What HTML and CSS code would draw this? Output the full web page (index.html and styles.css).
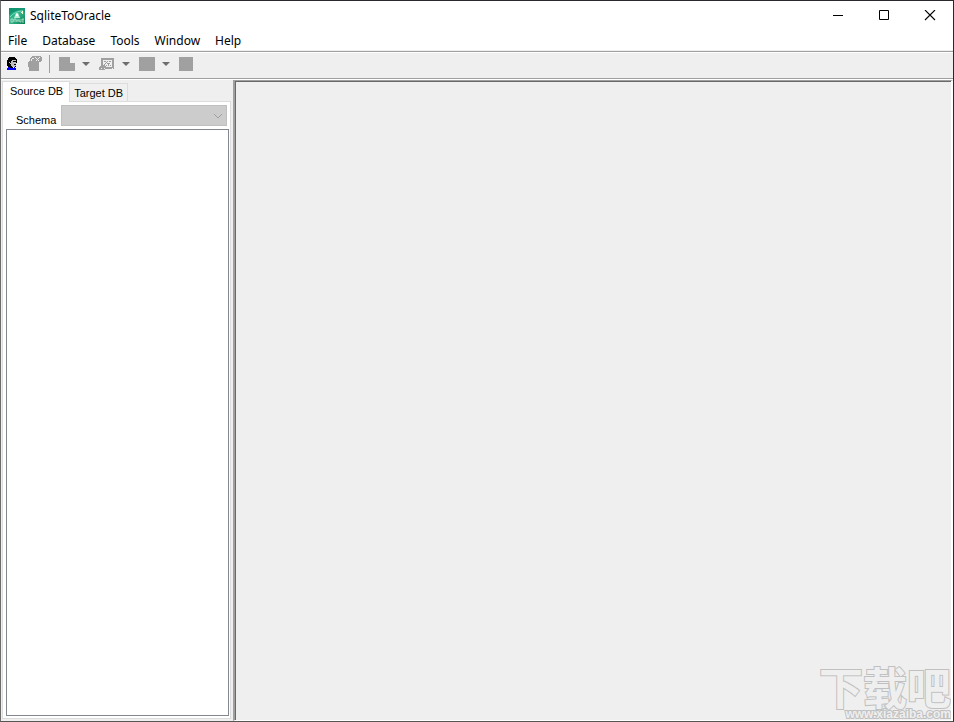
FILE: index.html
```html
<!DOCTYPE html>
<html lang="en">
<head>
    <meta charset="UTF-8">
    <meta name="viewport" content="width=device-width, initial-scale=1.0">
    <title>SqliteToOracle</title>
    <link rel="stylesheet" href="styles.css">
</head>
<body>

<div class="window">
    <header class="titlebar">
        <svg class="app-icon" width="16" height="16" viewBox="0 0 16 16" aria-hidden="true">
            <defs>
                <linearGradient id="green" x1="0" y1="0" x2="1" y2="1">
                    <stop offset="0" stop-color="#12a880"/>
                    <stop offset="0.5" stop-color="#35b78c"/>
                    <stop offset="1" stop-color="#087c50"/>
                </linearGradient>
            </defs>
            <rect width="16" height="16" fill="url(#green)"/>
            <path d="M0 7Q6 2 14 2L16 5V0H0z" fill="#0a8a68" opacity=".7"/>
            <path d="M1 9Q6 3 14 3" fill="none" stroke="#7fd8b9"/>
            <path d="M5 10L7 5H9L11 10z" fill="#b9ecd8"/>
            <path d="M7 6h2v2H7z" fill="#fff"/>
            <path d="M12 4h2v1h-2zM13 3h1v3h-1z" fill="#f4ffd8"/>
            <path d="M2 11h2v3H2zM5 14v-3h2v3M8 14v-2h2v2M11 11v3h1M15 11h-2v3h2M13 12h2" fill="none" stroke="#b4e4ce" stroke-width=".8"/>
        </svg>
        <h1 class="title">SqliteToOracle</h1>
        <div class="window-buttons">
            <button type="button" aria-label="Minimize">
                <svg width="12" height="12" viewBox="0 0 12 12"><path d="M1 5.5h10" stroke="#000"/></svg>
            </button>
            <button type="button" aria-label="Maximize">
                <svg width="12" height="12" viewBox="0 0 12 12"><path d="M1.5 .5h9v9h-9z" fill="none" stroke="#000"/></svg>
            </button>
            <button type="button" aria-label="Close">
                <svg width="12" height="12" viewBox="0 0 12 12"><path d="M1 0l10 10M11 0L1 10" stroke="#000" stroke-width="1.1"/></svg>
            </button>
        </div>
    </header>

    <nav class="menubar">
        <button type="button">File</button>
        <button type="button">Database</button>
        <button type="button">Tools</button>
        <button type="button">Window</button>
        <button type="button">Help</button>
    </nav>

    <div class="toolbar">
        <button type="button" class="tool" aria-label="Connect">
            <svg width="16" height="16" viewBox="0 0 16 16" shape-rendering="crispEdges">
                <path d="M5 1h6v1h1v1h1v4h-1v4h-3v1H5v-1H4v-1H3V4h1V2h1z" fill="#000"/>
                <path d="M8 4h4v6h-1v1H8v-1H7V8H6V7H5V6h1v1h1V5h1z" fill="#c0c0c0"/>
                <path d="M9 5h3v1H9zM10 8h2v1h-2z" fill="#000"/>
                <path d="M4 11h2v1h4v-1h1v1h1v2H3v-2h1z" fill="#00f"/>
            </svg>
        </button>
        <button type="button" class="tool" aria-label="Disconnect" disabled>
            <svg width="16" height="16" viewBox="0 0 16 16" shape-rendering="crispEdges">
                <path d="M5 0h9v1h1v4h-1v1h-2v9H2v-4H1V6h1V5h1V2h1V1h1z" fill="#a0a0a0"/>
                <path d="M8 1h1v1h1v1h1V2h1V1h1v1h-1v1h-1v1h1v1h-1V4h-1v1H9V4h1V3H9V2H8zM5 2h2v1H5zM4 3h1v2H4z" fill="#efefef"/>
            </svg>
        </button>
        <span class="separator"></span>
        <button type="button" class="tool" aria-label="New query" disabled>
            <svg width="16" height="16" viewBox="0 0 16 16"><path d="M0 1h11v6h5v8H0z" fill="#a0a0a0" shape-rendering="crispEdges"/></svg>
        </button>
        <button type="button" class="drop" aria-label="Query options" disabled>
            <svg width="8" height="4" viewBox="0 0 8 4"><path d="M0 0h8L4 4z" fill="#6d6d6d"/></svg>
        </button>
        <button type="button" class="tool" aria-label="Table data" disabled>
            <svg width="16" height="16" viewBox="0 0 16 16" shape-rendering="crispEdges">
                <path d="M2 2h13v11H6v1H0v-3h1v-1h1z" fill="#a0a0a0"/>
                <path d="M4 4h9v7H7v-1H6V9H4z" fill="#efefef"/>
                <path d="M5 5h2v1H5zM8 5h1v1H8zM10 5h2v1h-2zM6 7h1v1H6zM8 7h3v1H8zM7 6h1v1H7zM9 8h1v2H9zM11 9h1v1h-1zM5 8h1v1H5zM7 9h1v1H7z" fill="#a0a0a0"/>
                <path d="M2 12h1v1H2zM5 12h1v1H5zM13 12h1v1h-1z" fill="#efefef"/>
            </svg>
        </button>
        <button type="button" class="drop" aria-label="Table options" disabled>
            <svg width="8" height="4" viewBox="0 0 8 4"><path d="M0 0h8L4 4z" fill="#6d6d6d"/></svg>
        </button>
        <button type="button" class="tool" aria-label="Export" disabled>
            <svg width="16" height="16" viewBox="0 0 16 16"><path d="M0 1h16v14H0z" fill="#a0a0a0" shape-rendering="crispEdges"/></svg>
        </button>
        <button type="button" class="drop" aria-label="Export options" disabled>
            <svg width="8" height="4" viewBox="0 0 8 4"><path d="M0 0h8L4 4z" fill="#6d6d6d"/></svg>
        </button>
        <button type="button" class="tool" aria-label="Stop" disabled>
            <svg width="16" height="16" viewBox="0 0 16 16"><path d="M0 1h14v14H0z" fill="#a0a0a0" shape-rendering="crispEdges"/></svg>
        </button>
    </div>

    <div class="main">
        <aside class="sidebar">
            <div class="tabs" role="tablist">
                <button type="button" class="tab active" role="tab" aria-selected="true">Source DB</button>
                <button type="button" class="tab" role="tab" aria-selected="false">Target DB</button>
            </div>
            <div class="tab-page" role="tabpanel">
                <div class="schema-row">
                    <label for="schema">Schema</label>
                    <div class="select-box">
                        <select id="schema" disabled></select>
                        <svg class="chevron" width="10" height="6" viewBox="0 0 10 6" aria-hidden="true"><path d="M1 1l4 4 4-4" fill="none" stroke="#a0a0a0"/></svg>
                    </div>
                </div>
                <div class="tree"></div>
            </div>
        </aside>
        <main class="workspace">
            <div class="watermark">
                <span class="mark-name" lang="zh">下载吧</span>
                <span class="mark-url">www.xiazaiba.com</span>
            </div>
        </main>
    </div>
</div>

</body>
</html>
```

FILE: styles.css
```css
* {
    box-sizing: border-box;
}

body {
    margin: 0;
    font-family: "Noto Sans", "Open Sans", sans-serif;
    font-size: 12px;
    color: #000;
}

button {
    margin: 0;
    padding: 0;
    border: none;
    background: none;
    font: inherit;
    color: inherit;
}

svg {
    display: block;
}

.window {
    display: flex;
    flex-direction: column;
    height: 100vh;
    border: 1px solid #29282c;
    border-left-color: #6c6c6c;
    border-bottom-color: #555;
    background-color: #efefef;
}

/* title bar */
.titlebar {
    display: flex;
    align-items: center;
    height: 29px;
    padding-left: 8px;
    background-color: #fff;
}

.title {
    flex: 1;
    margin: 0 0 0 5px;
    font-size: 12px;
    font-weight: normal;
}

.window-buttons {
    display: flex;
}

.window-buttons button {
    display: flex;
    justify-content: center;
    align-items: center;
    width: 46px;
    height: 29px;
}

/* menu */
.menubar {
    display: flex;
    height: 20px;
    background-color: #fff;
}

.menubar button {
    padding: 0 8px 0 7px;
    line-height: 22px;
}

/* toolbar */
.toolbar {
    display: flex;
    align-items: center;
    height: 28px;
    margin-top: 1px;
    padding: 0 0 2px 3px;
    border-top: 1px solid #a0a0a0;
    border-bottom: 1px solid #a0a0a0;
    box-shadow: inset 0 1px #fff, 0 1px #fff;
}

.tool {
    width: 16px;
    margin-right: 7px;
}

.separator {
    width: 1px;
    height: 18px;
    margin: 0 9px 0 -1px;
    background-color: #a0a0a0;
}

.drop {
    width: 8px;
    margin-right: 9px;
}

/* panels */
.main {
    display: flex;
    flex: 1;
    min-height: 0;
    margin-top: 1px;
}

.sidebar {
    display: flex;
    flex-direction: column;
    width: 230px;
    padding: 1px 0 2px 1px;
    font-family: "Liberation Sans", Arial, sans-serif;
    font-size: 11px;
}

.tabs {
    display: flex;
    align-items: flex-end;
    height: 20px;
}

.tab {
    height: 18px;
    padding: 0 4px;
    border: 1px solid #dcdcdc;
    border-left: none;
    border-bottom: none;
    background-color: #f0f0f0;
}

.tab.active {
    z-index: 1;
    height: 21px;
    margin-bottom: -1px;
    padding: 0 6px 2px 7px;
    border-left: 1px solid #dcdcdc;
    background-color: #fff;
}

.tab-page {
    display: flex;
    flex-direction: column;
    flex: 1;
    gap: 3px;
    padding: 3px 1px 2px 3px;
    border: 1px solid #dcdcdc;
    background-color: #fff;
}

.schema-row {
    display: flex;
    align-items: center;
    gap: 5px;
    padding: 0 2px 0 10px;
}

.schema-row label {
    padding-top: 8px;
}

.select-box {
    position: relative;
    flex: 1;
}

.select-box select {
    display: block;
    width: 100%;
    height: 21px;
    border: 1px solid #bfbfbf;
    border-radius: 0;
    background-color: #ccc;
    appearance: none;
    opacity: 1;
}

.chevron {
    position: absolute;
    top: 8px;
    right: 4px;
}

.tree {
    flex: 1;
    border: 1px solid #828790;
    background-color: #fff;
}

.workspace {
    position: relative;
    flex: 1;
    margin-left: 2px;
    border-style: solid;
    border-width: 1px 2px 1px 2px;
    border-color: #a0a0a0 #fff #fff #a0a0a0;
    box-shadow: inset 1px 1px #696969;
    overflow: hidden;
}

.watermark {
    position: absolute;
    right: 0;
    bottom: 0;
    display: flex;
    flex-direction: column;
    align-items: flex-end;
    color: #efefef;
    -webkit-text-stroke: 2px #c0c0c0;
    paint-order: stroke fill;
}

.mark-name {
    font-family: "Noto Sans CJK SC", sans-serif;
    font-size: 44px;
    font-weight: bold;
    line-height: 44px;
}

.mark-url {
    font-family: "Liberation Sans", Arial, sans-serif;
    font-size: 12px;
    font-weight: bold;
    line-height: 12px;
}
```
